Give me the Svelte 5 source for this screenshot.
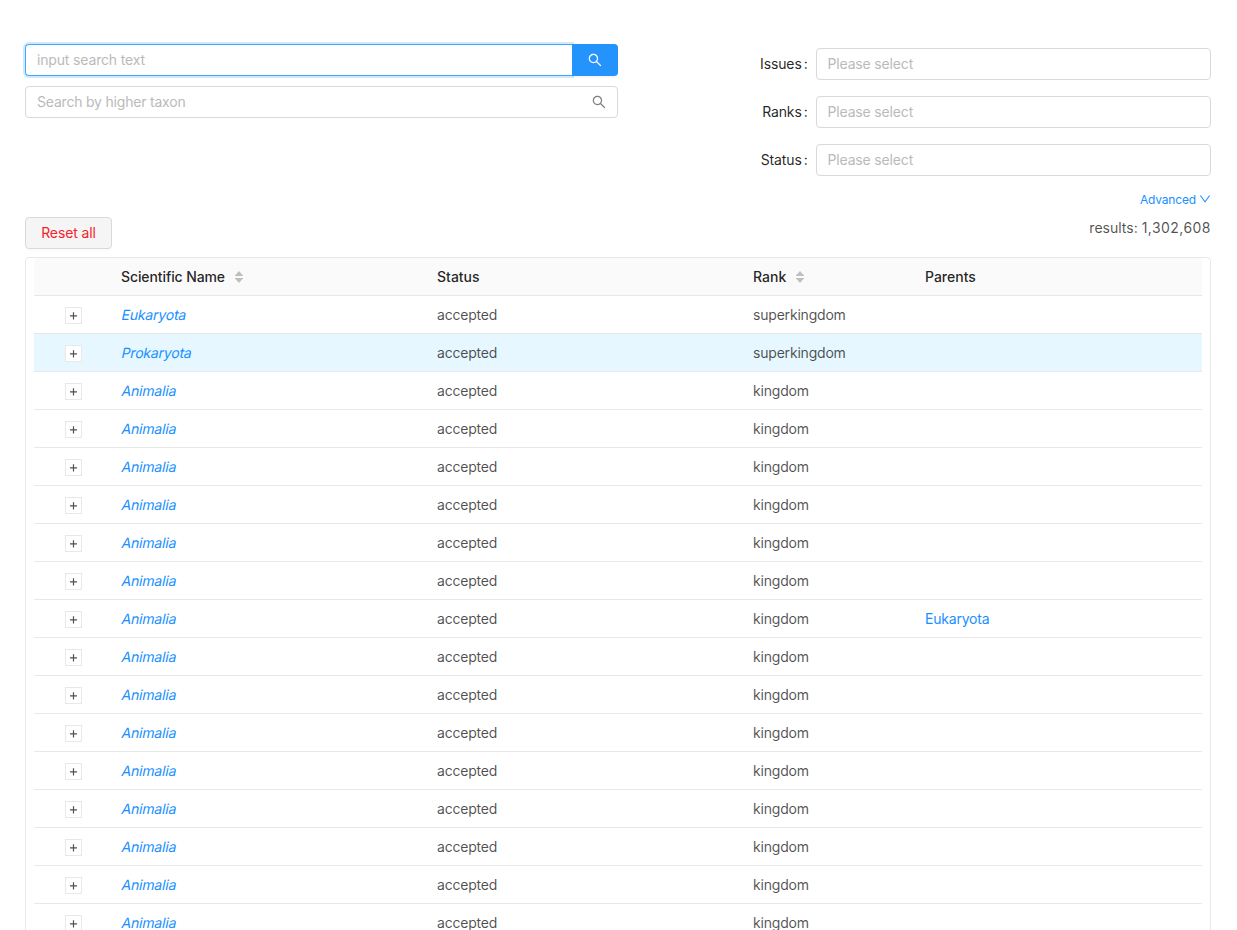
<script>
  const filters = ['Issues', 'Ranks', 'Status'];
  const rows = [
    { name: 'Eukaryota', rank: 'superkingdom' },
    { name: 'Prokaryota', rank: 'superkingdom', hover: true },
    ...Array.from({ length: 15 }, (_, i) => ({
      name: 'Animalia',
      rank: 'kingdom',
      parent: i === 6 ? 'Eukaryota' : ''
    }))
  ];
</script>

{#snippet search()}
  <svg class="search-icon" viewBox="64 64 896 896" width="14" height="14" fill="currentColor">
    <path d="M909.6 854.5L649.9 594.8C690.2 542.7 712 479 712 412c0-80.2-31.3-155.4-87.9-212.1-56.6-56.7-132-87.9-212.1-87.9s-155.5 31.3-212.1 87.9C143.2 256.5 112 331.8 112 412c0 80.1 31.3 155.5 87.9 212.1C256.5 680.8 331.8 712 412 712c67 0 130.6-21.8 182.7-62l259.7 259.6a8.2 8.2 0 0 0 11.6 0l43.6-43.5a8.2 8.2 0 0 0 0-11.6zM570.4 570.4C528 612.7 471.8 636 412 636s-116-23.3-158.4-65.6C211.3 528 188 471.8 188 412s23.3-116.1 65.6-158.4C296 211.3 352.2 188 412 188s116.1 23.2 158.4 65.6S636 352.2 636 412s-23.3 116.1-65.6 158.4z" />
  </svg>
{/snippet}

{#snippet sorter()}
  <svg class="sorter" viewBox="0 0 8 12" width="8" height="12" fill="#bfbfbf">
    <path d="M0 4.4 3.6.4Q4 0 4.4.4L8 4.4V5H0z" />
    <path d="M0 7.6 3.6 11.6Q4 12 4.4 11.6L8 7.6V7H0z" />
  </svg>
{/snippet}

<div class="page">
  <div class="top">
    <div class="searches">
      <div class="group">
        <div class="field focused"><span>input search text</span></div>
        <button class="go" aria-label="Search">{@render search()}</button>
      </div>
      <div class="field taxon"><span>Search by higher taxon</span>{@render search()}</div>
    </div>
    <div class="filters">
      {#each filters as label}
        <div class="filter">
          <div class="label"><span>{label}</span><span class="colon">:</span></div>
          <div class="field select"><span>Please select</span></div>
        </div>
      {/each}
      <div class="advanced">
        <span>Advanced</span>
        <svg viewBox="64 64 896 896" width="12" height="12" fill="currentColor">
          <path d="M884 256h-75c-5.1 0-9.9 2.5-12.9 6.6L512 654.2 227.9 262.6c-3-4.1-7.8-6.6-12.9-6.6h-75c-6.5 0-10.3 7.4-6.5 12.7l352.6 486.1c12.8 17.6 39 17.6 51.7 0l352.6-486.1c3.9-5.3.1-12.7-6.4-12.7z" />
        </svg>
      </div>
    </div>
  </div>

  <div class="actions">
    <button class="reset">Reset all</button>
    <div class="results">results: <span class="count">1,302,608</span></div>
  </div>

  <div class="table">
    <div class="row head">
      <div></div>
      <div><span class="title">Scientific Name</span>{@render sorter()}</div>
      <div>Status</div>
      <div>Rank{@render sorter()}</div>
      <div>Parents</div>
    </div>
    {#each rows as row}
      <div class="row" class:hover={row.hover}>
        <div class="expand">
          <svg viewBox="0 0 17 17" width="17" height="17">
            <rect x=".5" y=".5" width="16" height="16" fill="#fff" stroke="#e8e8e8" />
            <path d="M5 8.8H12M8.5 5.2V12.4" fill="none" stroke="#505050" stroke-width="1.2" />
          </svg>
        </div>
        <div><a class="name">{row.name}</a></div>
        <div>accepted</div>
        <div>{row.rank}</div>
        <div>{#if row.parent}<a>{row.parent}</a>{/if}</div>
      </div>
    {/each}
  </div>
</div>

<style>
  :global(body) {
    background: #fff;
  }
  .page {
    box-sizing: border-box;
    width: 1237px;
    height: 930px;
    overflow: hidden;
    padding: 44px 26px 0 25px;
    font-family: Inter, 'Liberation Sans', sans-serif;
    font-size: 14px;
    line-height: 21px;
    letter-spacing: -0.2px;
    color: rgba(0, 0, 0, 0.69);
  }
  .top {
    display: flex;
    justify-content: space-between;
    height: 173px;
  }
  .searches {
    width: 593px;
    display: flex;
    flex-direction: column;
    gap: 10px;
  }
  .group {
    display: flex;
  }
  .field {
    box-sizing: border-box;
    height: 32px;
    border: 1px solid #d9d9d9;
    border-radius: 4px;
    padding: 0 11px;
    display: flex;
    align-items: center;
    justify-content: space-between;
    background: #fff;
    color: #bababa;
    letter-spacing: -0.16px;
  }
  .field span {
    padding-bottom: 2px;
  }
  .taxon {
    letter-spacing: -0.2px;
  }
  .focused {
    width: 547px;
    border-color: #40a9ff;
    border-right: 0;
    border-radius: 4px 0 0 4px;
    box-shadow: 0 0 0 2px rgba(24, 144, 255, 0.2);
  }
  .go {
    position: relative;
    width: 46px;
    height: 32px;
    border: 0;
    padding: 0;
    border-radius: 0 4px 4px 0;
    background: #2593fc;
    color: #fff;
    display: flex;
    align-items: center;
    justify-content: center;
    box-shadow: 0 2px 0 rgba(0, 0, 0, 0.035);
  }
  .taxon .search-icon {
    color: #808080;
  }
  .filters {
    width: 460px;
    padding-top: 4px;
    display: flex;
    flex-direction: column;
    gap: 16px;
  }
  .filter {
    display: flex;
    justify-content: flex-end;
    align-items: center;
  }
  .label {
    color: rgba(0, 0, 0, 0.87);
    display: flex;
    margin-right: 8.4px;
    padding-bottom: 2px;
    letter-spacing: -0.12px;
  }
  .colon {
    margin-left: 2px;
  }
  .select {
    width: 395px;
    padding-left: 10.5px;
  }
  .advanced {
    display: flex;
    justify-content: flex-end;
    align-items: center;
    gap: 3px;
    height: 18px;
    margin-top: -2px;
    font-size: 12px;
    letter-spacing: -0.16px;
    color: #1890ff;
  }
  .actions {
    display: flex;
    justify-content: space-between;
    height: 40px;
  }
  .reset {
    box-sizing: border-box;
    width: 87px;
    height: 32px;
    padding: 0 0 2px;
    border: 1px solid #d9d9d9;
    border-radius: 4px;
    background: #f5f5f5;
    color: #f5222d;
    font: inherit;
    letter-spacing: -0.12px;
    box-shadow: 0 2px 0 rgba(0, 0, 0, 0.015);
  }
  .results {
    line-height: 22px;
    letter-spacing: 0;
    white-space: nowrap;
  }
  .count {
    letter-spacing: 0.46px;
  }
  .table {
    border: 1px solid #e8e8e8;
    border-radius: 4px;
    padding: 0 8px;
    height: 740px;
  }
  .row {
    box-sizing: border-box;
    height: 38px;
    display: grid;
    grid-template-columns: 79px 316px 316px 172px 1fr;
    align-items: center;
    border-bottom: 1px solid #e8e8e8;
  }
  .row > div {
    padding: 0 8px;
    display: flex;
    align-items: center;
  }
  .head {
    background: #fafafa;
    border-radius: 4px 4px 0 0;
    font-weight: 500;
    letter-spacing: 0;
    color: rgba(0, 0, 0, 0.87);
  }
  .title {
    letter-spacing: -0.1px;
  }
  .hover {
    background: #e6f7ff;
  }
  .row > .expand {
    padding: 1px 0 0;
    justify-content: center;
  }
  .sorter {
    margin-left: 10px;
  }
  a {
    color: #1890ff;
  }
  .name {
    margin-left: 0.6px;
    transform: skewX(-12deg);
  }
</style>
